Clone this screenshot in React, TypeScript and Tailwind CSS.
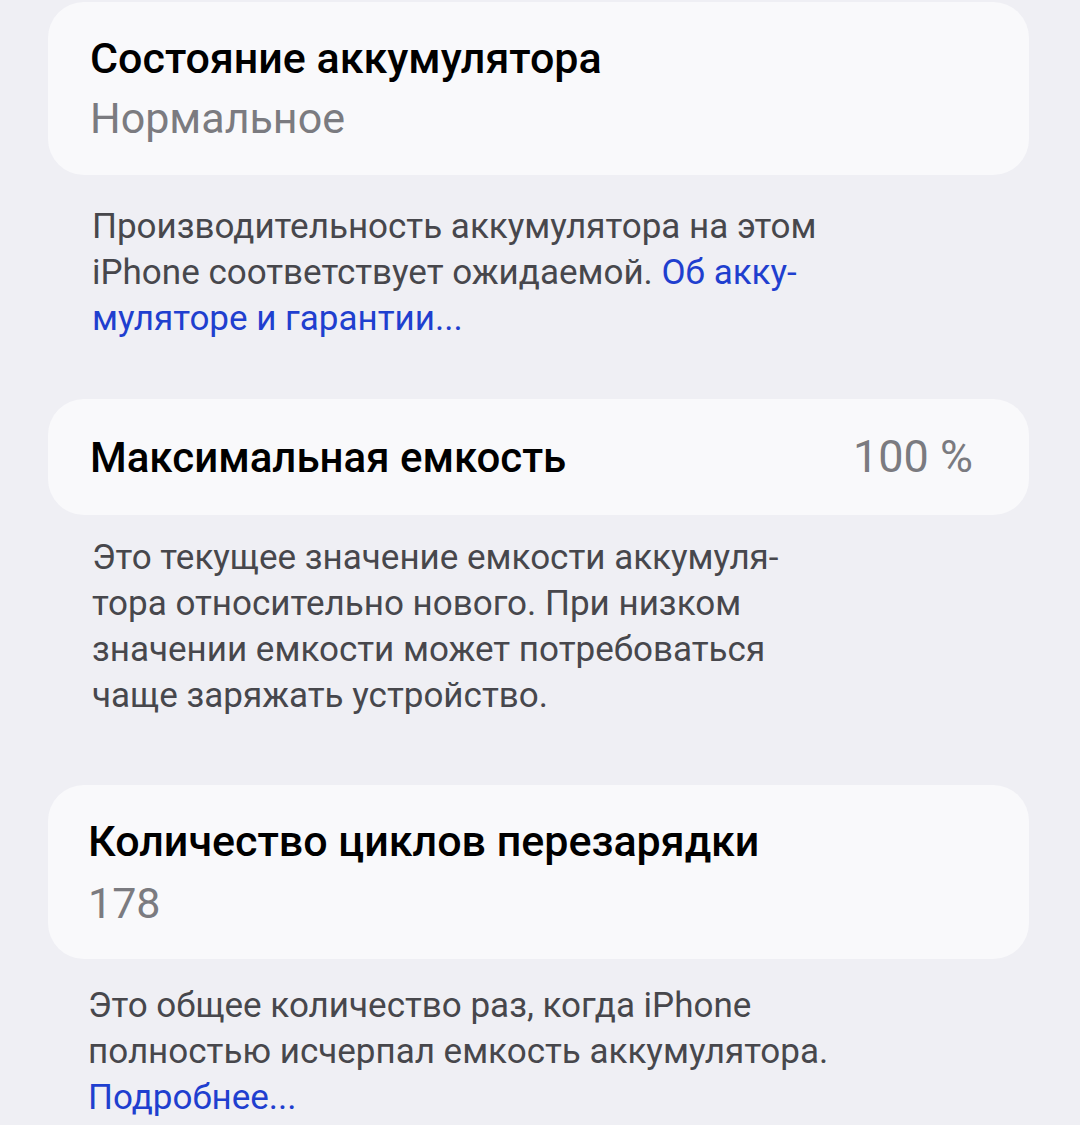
import React from "react";

const font = { fontFamily: "Roboto, 'Liberation Sans', sans-serif" };

export default function App() {
  return (
    <div className="w-[1080px] h-[1125px] overflow-hidden bg-[#efeff4] text-black" style={font}>
      <div className="flex flex-col px-[48px] pr-[51px] pt-[2px]">
        <div className="rounded-[36px] bg-[#f9f9fb] h-[173px] px-[42px] pt-[30px]">
          <div className="text-[43px] leading-[52px] font-medium">Состояние аккумулятора</div>
          <div className="text-[43px] leading-[56px] text-[#7b7b80] mt-[6px]">Нормальное</div>
        </div>
        <div className="px-[44px] mt-[29px] text-[35px] leading-[46px] text-[#47474c]">
          Производительность аккумулятора на этом
          <br />
          iPhone соответствует ожидаемой. <span className="text-[#1f3fcf]">Об акку-</span>
          <br />
          <span className="text-[#1f3fcf]">муляторе и гарантии...</span>
        </div>
        <div className="mt-[57px] rounded-[36px] bg-[#f9f9fb] h-[116px] pl-[42px] pr-[56px] flex items-center justify-between">
          <div className="text-[42px] font-medium">Максимальная емкость</div>
          <div className="text-[45px] text-[#7b7b80]">100 %</div>
        </div>
        <div className="px-[44px] mt-[20px] text-[35px] leading-[46px] text-[#47474c]">
          Это текущее значение емкости аккумуля-
          <br />
          тора относительно нового. При низком
          <br />
          значении емкости может потребоваться
          <br />
          чаще заряжать устройство.
        </div>
        <div className="mt-[66px] rounded-[36px] bg-[#f9f9fb] h-[174px] px-[40px] pt-[30px]">
          <div className="text-[43px] leading-[52px] font-medium">Количество циклов перезарядки</div>
          <div className="text-[43px] leading-[56px] text-[#7b7b80] mt-[8px]">178</div>
        </div>
        <div className="px-[40px] mt-[24px] text-[35px] leading-[46px] text-[#47474c]">
          Это общее количество раз, когда iPhone
          <br />
          полностью исчерпал емкость аккумулятора.
          <br />
          <span className="text-[#1f3fcf]">Подробнее...</span>
        </div>
      </div>
    </div>
  );
}
